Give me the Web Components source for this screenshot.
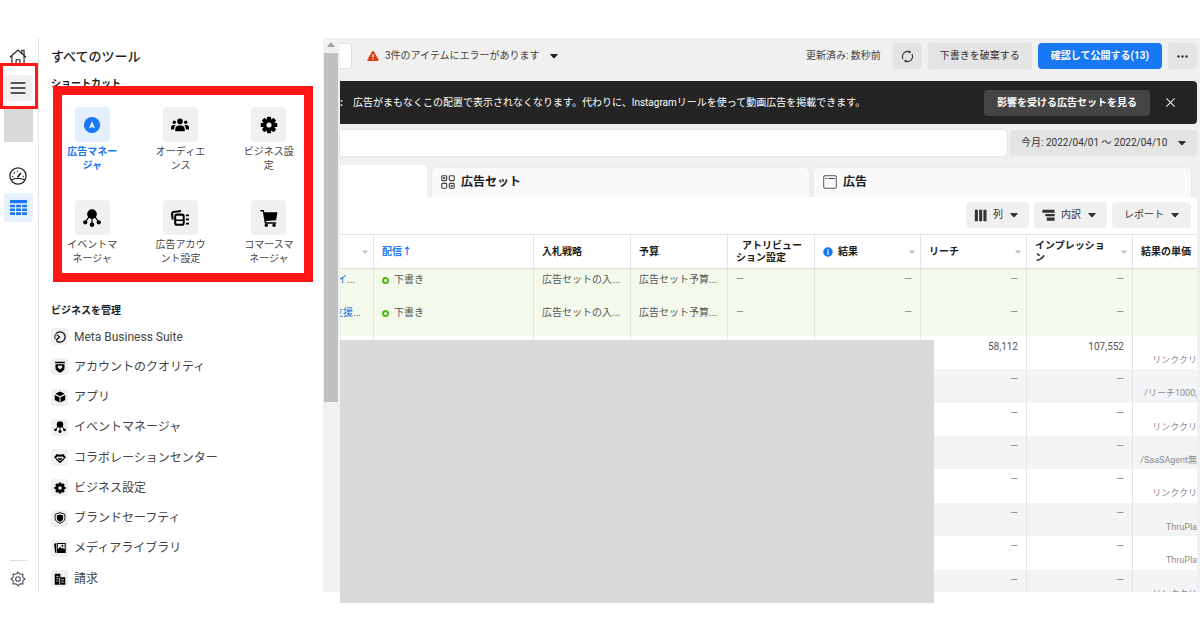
<!DOCTYPE html>
<html lang="ja">
<head>
<meta charset="utf-8">
<title>広告マネージャ</title>
<style>
body { margin: 0; background: #fff; color: #1c1e21; font: 10px/14px Roboto, "Noto Sans CJK JP", sans-serif; }
</style>
</head>
<body>
<ads-app></ads-app>
<script>
const define = (name, html, setup) => customElements.define(name, class extends HTMLElement {
  connectedCallback() {
    if (this.shadowRoot) return;
    const t = document.createElement('template');
    t.innerHTML = `<style>*{box-sizing:border-box}button,input{font:inherit;color:inherit;border:0;margin:0;padding:0;background:none}a{color:inherit;text-decoration:none}h1,h2,p{margin:0}</style>` + (typeof html === 'function' ? html(this) : html);
    this.attachShadow({ mode: 'open' }).append(t.content.cloneNode(true));
    if (setup) setup(this);
  }
});

const gearTeeth = n => Array.from({ length: 8 }, (_, i) => `<rect x="${8 - n / 2}" y=".6" width="${n}" height="4" rx=".8" transform="rotate(${i * 45} 8 8)"/>`).join('');
const ICONS = {
  home: '<g fill="none" stroke="currentColor" stroke-width="1"><path d="M.8 8.2 8 1.8l7.2 6.4M2.6 7v8h10.8V7M11.4 4.5V2h2v4.4"/><path d="M6.3 15v-4.6h3.4V15"/></g>',
  menu: '<path d="M2 3.5h12M2 8h12M2 12.5h12" stroke="currentColor" stroke-width="1.3" stroke-linecap="round"/>',
  gauge: '<g fill="none" stroke="currentColor" stroke-width="1.1"><circle cx="8" cy="8" r="7.2"/><path d="M1.800 11.400c3.700-1.600 8.700-1.600 12.400 0"/><path d="m7.600 9.200 3-3.800" stroke-width="1.500"/><path d="M2.800 8.400h1M4.300 5l.8.700M7.500 3.300v1M12.200 8.400h1" stroke-width="1.200"/></g>',
  grid: '<path d="M0 1h16v3H0zM0 5.300h4.700v2.400H0zm5.700 0h4.700v2.400H5.700zm5.700 0H16v2.400h-4.600zM0 8.900h4.700v2.400H0zm5.700 0h4.700v2.400H5.700zm5.700 0H16v2.400h-4.600zM0 12.500h4.700V15H1a1 1 0 0 1-1-1zm5.700 0h4.700V15H5.700zm5.700 0H16V14a1 1 0 0 1-1 1h-3.600z"/>',
  gearline: '<g fill="none" stroke="currentColor" stroke-width="1.100" stroke-linejoin="round"><path d="M6.600 2.800 8 1l1.400 1.800 1.300.5 2.300-.3-.3 2.300.5 1.300L15 8l-1.800 1.400-.5 1.300.3 2.300-2.300-.3-1.300.5L8 15l-1.400-1.800-1.300-.5-2.300.3.3-2.300-.5-1.300L1 8l1.800-1.400.5-1.300L3 3l2.300.3z"/><circle cx="8" cy="8" r="2.300"/></g>',
  gear: gearTeeth(3.6) + '<path fill-rule="evenodd" d="M8 2.500a5.500 5.500 0 1 0 0 11 5.500 5.500 0 0 0 0-11zm0 3.200a2.300 2.300 0 1 1 0 4.600 2.300 2.300 0 0 1 0-4.600z"/>',
  ads: '<circle cx="8" cy="8" r="7.200"/><path fill="#e4effe" d="M8 4.400 10.800 11 8 9.800 5.200 11z"/>',
  people: '<circle cx="8" cy="4.800" r="2.500"/><circle cx="2.900" cy="5.600" r="1.500"/><circle cx="13.100" cy="5.600" r="1.500"/><path d="M3.800 13.500v-1.700a3.400 3.400 0 0 1 3.400-3.300h1.600a3.400 3.400 0 0 1 3.400 3.300v1.700zM0 12v-1.600A2.400 2.400 0 0 1 2.400 8h1.900c-1 .9-1.500 2.100-1.500 4zm16 0v-1.600A2.400 2.400 0 0 0 13.600 8h-1.900c1 .9 1.500 2.100 1.500 4z"/>',
  events: '<circle cx="8" cy="4.600" r="4.300"/><circle cx="2" cy="11.800" r="1.900"/><circle cx="14" cy="11.800" r="1.900"/><circle cx="8" cy="14" r="2"/><path d="M8 8v6M5.600 6.500 2 11.800M10.400 6.500l3.600 5.300" stroke="currentColor" stroke-width="1.100"/>',
  account: '<path fill="none" stroke="currentColor" stroke-width="1.800" d="M1.500 9.500.9 4.400a1.600 1.600 0 0 1 1.400-1.800l6.600-.8"/><rect x="3.700" y="5" width="7.600" height="9" rx="1.600" fill="none" stroke="currentColor" stroke-width="1.800"/><path d="M3.700 9.400h7.600v1.300H3.700zM13.300 4.800H16v1.600h-2.700zm0 3.700H16v1.600h-2.700zm0 3.700H16v1.600h-2.700z"/>',
  cart: '<path d="M.3.800h2.300c.6 0 .9.400 1 .9l.2 1.100h11.700l-1.200 7.200-9 .7.200 1h8.900v1.400H4.300L2.500 2.300H.3z"/><circle cx="5.600" cy="14.400" r="1.500"/><circle cx="12.500" cy="14.400" r="1.500"/>',
  suite: '<g fill="none" stroke="currentColor" stroke-width="1.600"><path d="M3.200 3A6.900 6.900 0 1 1 3.200 13"/><path d="M3.200 3C1 5.200.6 8.500 1.600 10.800" stroke-width="1.300"/><path d="m3.600 4.800 3.800 3.200-4.800 4.400"/></g>',
  shield: '<path fill-rule="evenodd" d="M1.500 1h13v2h-13zM2 4.200h12v5.300c0 2.500-2.500 4.500-6 6-3.500-1.500-6-3.500-6-6zm6 7 3-3c.8-1.800-1.800-3-3-1.300C6.800 5.200 4.200 6.400 5 8.200z"/>',
  cube: '<path d="m8 .8 6.300 3L8 6.900 1.700 3.800zM1 5.200l6.300 3.100v7L1 12zm14 0L8.700 8.300v7L15 12z"/>',
  hands: '<path d="M0 7.200 3.600 2.600l3 1.200L8 3l1.400.8 3-1.200L16 7.200l-2 1.900-2.500-3-3.500.3-3.500-.3L2 9.100z"/><path fill="none" stroke="currentColor" stroke-width="1.800" d="m2.800 9 5.200 4.900L13.200 9"/><path d="m4.800 8.500 1.200-1 2 1.300 2-1.300 1.200 1L8 11.600z"/>',
  safety: '<path fill="none" stroke="currentColor" stroke-width="1.200" d="M8 .9 14.500 3v5.500c0 2.900-2.700 5.200-6.500 6.700-3.800-1.500-6.500-3.800-6.500-6.700V3z"/><path d="m8 3.300 4.200 1.300v4c0 1.800-1.700 3.300-4.200 4.500-2.500-1.200-4.200-2.700-4.200-4.500v-4z"/>',
  media: '<path d="m.2 2.300 2.600-.8v12.600l-1.400.3z"/><path fill-rule="evenodd" d="M3.600 1.200h12v13.600h-12zm1.400 8.600 3-3.200 2 2.200 1.500-1.300 2.700 2.300V2.700H5z"/><circle cx="11.200" cy="5" r="1.300"/>',
  billing: '<path d="M1 1h7.500v4.500H15V15.500H1z"/><path stroke="#f0f0f0" d="M3 4.500h3.500M3 7.500h3M3 10.500h3M7.500 6v9.500M9 9h4.500M9 12h4.500"/>',
  alert: '<path fill="#dd3c14" d="M8 1.200c.6 0 1 .3 1.300.8l6 10.700c.5 1-.1 2-1.200 2H1.900c-1.100 0-1.700-1-1.200-2L6.700 2c.3-.500.7-.8 1.300-.8z"/><path stroke="#fff" stroke-width="1.700" d="M8 5.200v4.600M8 11v1.700"/>',
  refresh: '<g fill="none" stroke="currentColor" stroke-width="1.300"><path d="M2.600 11A6.200 6.200 0 0 1 10.500 2.300M13.400 5a6.200 6.200 0 0 1-7.900 8.700"/></g><path d="m9.800.3 2.800 2.600-3.600 1.500zM6.200 15.700l-2.800-2.600 3.600-1.500z"/>',
  more: '<circle cx="3" cy="8" r="1.500"/><circle cx="8" cy="8" r="1.500"/><circle cx="13" cy="8" r="1.500"/>',
  close: '<path d="m2 2 12 12M14 2 2 14" stroke="currentColor" stroke-width="1.600"/>',
  caret: '<path d="M1.500 4h13c1 0 1.300.8.7 1.500l-5.800 6.300c-.8.900-2 .9-2.800 0L.8 5.500C.2 4.800.5 4 1.500 4z"/>',
  adset: '<g fill="none" stroke="currentColor" stroke-width="1.300"><rect x=".9" y=".9" width="5.600" height="5.600" rx="1"/><rect x="9.500" y=".9" width="5.600" height="5.600" rx="1"/><rect x=".9" y="9.500" width="5.600" height="5.600" rx="1"/><rect x="9.500" y="9.500" width="5.600" height="5.600" rx="1"/><path d="M2.500 3.700h2.400M11.100 12.300h2.400" stroke-width="2"/></g>',
  ad: '<rect x=".8" y=".8" width="14.400" height="14.400" rx="1.500" fill="none" stroke="currentColor"/><path d="M2.500 4h2M6 4h7.500" stroke="currentColor" stroke-width="1.200"/>',
  columns: '<path d="M1 1h3.800v14H1zm5.300 0h3.800v14H6.300zm5.300 0h3.800v14h-3.800z"/>',
  breakdown: '<path d="M.5 1h15v3.500H.5zM4 6.200h11.500V9H4zm2 4.400h9.500v3.900H6z"/>',
  info: '<circle cx="8" cy="8" r="7.600" fill="#1877f2"/><path stroke="#fff" stroke-width="2" d="M8 6.800v5.400M8 3.600v2"/>'
};

define('ui-icon', el => `<style>:host{display:block;flex:none;width:var(--size,16px);height:var(--size,16px)}svg{display:block;width:100%;height:100%}</style>
<svg viewBox="0 0 16 16" fill="currentColor" aria-hidden="true">${ICONS[el.getAttribute('name')]}</svg>`);

define('ui-button', el => `<style>
:host{display:flex;height:26px;--bg:#e4e4e4;--pad:12px}
button{flex:1;display:flex;align-items:center;justify-content:center;gap:8px;background:var(--bg);border-radius:4px;padding:0 var(--pad);white-space:nowrap;color:#333}
:host([variant=primary]) button{background:#1877f2;color:#fff;font-weight:700;padding:0 13px}
:host([variant=dark]) button{background:#444;color:#fff;font-weight:700;padding:0 13px}
:host([variant=soft]) button{background:#f0f0f0;gap:7px}
:host([variant=spread]) button{justify-content:space-between}
</style><button type="button" aria-label="${el.getAttribute('label') || ''}"><slot></slot></button>`,
el => { if (!el.hasAttribute('label')) el.shadowRoot.querySelector('button').removeAttribute('aria-label'); });

define('app-rail', `<style>
:host{display:flex;flex-direction:column;align-items:center;position:relative;border-right:1px solid #e3e3e3;padding:10px 2px 5px 0;color:#222}
button{display:grid;place-items:center;width:29px}
.home{height:17px;--size:18px}
.menu{height:26px;margin-top:10px;background:#f0f0f0;border-radius:4px;--size:18px}
.avatar{width:29px;height:33px;margin-top:8px;background:#d9d9d9}
.gauge{height:18px;margin-top:25px;--size:18px}
.table{height:29px;margin-top:8px;background:#e7f0fe;border-radius:3px;color:#1877f2;--size:17px}
hr{width:17px;border:0;border-top:1px solid #ddd;margin:auto 0 10px}
.settings{height:16px;--size:16px;color:#444b57}
.mark{position:absolute;top:25px;left:0;right:0;height:46px;border:3px solid #ff1616;pointer-events:none}
</style>
<button class="home" aria-label="ホーム"><ui-icon name="home"></ui-icon></button>
<button class="menu" aria-label="メニュー"><ui-icon name="menu"></ui-icon></button>
<div class="avatar"></div>
<button class="gauge" aria-label="概要"><ui-icon name="gauge"></ui-icon></button>
<button class="table" aria-label="キャンペーン"><ui-icon name="grid"></ui-icon></button>
<hr><button class="settings" aria-label="設定"><ui-icon name="gearline"></ui-icon></button>
<div class="mark"></div>`);

define('tool-shortcut', el => `<style>
:host{display:block;color:#444}
a{display:flex;flex-direction:column;align-items:center;gap:3px}
span{display:grid;place-items:center;width:35px;height:35px;border-radius:4px;background:#f0f0f0;color:#000;--size:18px}
b{font-weight:400;width:54px;text-align:center}
:host([active]) span{background:#e4effe;color:#1877f2}
:host([active]) b{font-weight:700;color:#1877f2}
</style><a href="#"><span><ui-icon name="${el.getAttribute('icon')}"></ui-icon></span><b><slot></slot></b></a>`);

define('tool-link', el => `<style>
:host{display:block}
a{display:flex;align-items:center;gap:6px;height:17px;font-size:12px;color:#444}
span{display:grid;place-items:center;width:17px;height:17px;border-radius:3px;background:#f0f0f0;color:#000}
ui-icon{--size:12px}
</style><a href="#"><span><ui-icon name="${el.getAttribute('icon')}"></ui-icon></span><slot></slot></a>`);

define('tools-panel', `<style>
:host{display:flex;min-height:0;background:#fff}
.body{flex:1;display:flex;flex-direction:column;min-width:0;overflow:hidden}
h1{font-size:13px;line-height:20px;font-weight:500;padding:9px 12px 0;color:#1c1e21}
h2{font-size:10px;line-height:14px;font-weight:700;padding:0 12px}
.first{margin-top:10px}
.shortcuts{position:relative;display:grid;grid-template-columns:repeat(3,1fr);row-gap:27px;margin:16px 10px 38px 9px}
.mark{position:absolute;inset:-21px 0 -16px 5px;border:9px solid #ff1616;pointer-events:none}
nav{flex:1;display:flex;flex-direction:column;justify-content:space-between;padding:10px 12px 5px}
.bar{width:17px;background:#f1f1f1;padding:0 2px 0 1px;display:flex;flex-direction:column}
.up{height:15px;display:grid;place-items:center;color:#a3a3a3;--size:8px;transform:scaleY(-1)}
.thumb{height:63%;background:#c1c1c1}
</style>
<div class="body">
<h1>すべてのツール</h1><h2 class="first">ショートカット</h2>
<div class="shortcuts">
<tool-shortcut icon="ads" active>広告マネージャ</tool-shortcut><tool-shortcut icon="people">オーディエンス</tool-shortcut><tool-shortcut icon="gear">ビジネス設定</tool-shortcut>
<tool-shortcut icon="events">イベントマネージャ</tool-shortcut><tool-shortcut icon="account">広告アカウント設定</tool-shortcut><tool-shortcut icon="cart">コマースマネージャ</tool-shortcut>
<div class="mark"></div></div>
<h2>ビジネスを管理</h2>
<nav>
<tool-link icon="suite">Meta Business Suite</tool-link><tool-link icon="shield">アカウントのクオリティ</tool-link><tool-link icon="cube">アプリ</tool-link><tool-link icon="events">イベントマネージャ</tool-link><tool-link icon="hands">コラボレーションセンター</tool-link><tool-link icon="gear">ビジネス設定</tool-link><tool-link icon="safety">ブランドセーフティ</tool-link><tool-link icon="media">メディアライブラリ</tool-link><tool-link icon="billing">請求</tool-link>
</nav></div>
<div class="bar"><div class="up"><ui-icon name="caret"></ui-icon></div><div class="thumb"></div></div>`);

define('top-bar', `<style>
:host{display:flex;align-items:center;gap:6px;height:26px;color:#444}
.account{width:12px;height:26px;background:#fff;border:1px solid #ddd;border-left:0;border-radius:0 4px 4px 0}
.alert{display:flex;align-items:center;gap:6px;margin:0 auto 0 9px;white-space:nowrap;--size:12px}
.alert .caret{--size:8px;color:#222;margin-left:4px}
.time{margin-right:6px;white-space:nowrap}
.icon{--pad:8px;--size:13px}
</style>
<div class="account"></div>
<button class="alert"><ui-icon name="alert"></ui-icon>3件のアイテムにエラーがあります<ui-icon class="caret" name="caret"></ui-icon></button>
<span class="time">更新済み: 数秒前</span>
<ui-button class="icon" label="更新"><ui-icon name="refresh"></ui-icon></ui-button>
<ui-button>下書きを破棄する</ui-button>
<ui-button variant="primary">確認して公開する(13)</ui-button>
<ui-button class="icon" label="その他"><ui-icon name="more"></ui-icon></ui-button>`);

define('notice-banner', `<style>
:host{display:flex;align-items:center;height:43px;background:#242424;color:#fff;border-radius:0 4px 4px 0;overflow:hidden;white-space:nowrap}
b{width:13px}p{flex:1;min-width:0}
.close{display:grid;place-items:center;width:10px;margin:0 22px 0 15px;--size:11px;color:#e8e8e8}
</style><b>:</b><p><slot></slot></p><ui-button variant="dark">影響を受ける広告セットを見る</ui-button>
<button class="close" aria-label="閉じる"><ui-icon name="close"></ui-icon></button>`);

define('filter-bar', `<style>
:host{display:flex;gap:3px;height:26px}
input{flex:1;min-width:0;background:#fff;border-radius:0 4px 4px 0;box-shadow:0 0 2px #ccc}
ui-button{width:187px;--size:8px;--pad:11px}
</style><input type="text" aria-label="検索とフィルター"><ui-button variant="spread">今月: 2022/04/01 ～ 2022/04/10<ui-icon name="caret"></ui-icon></ui-button>`);

define('level-tabs', `<style>
:host{display:flex;align-items:flex-end;gap:5px;padding-right:6px;height:32px}
button{flex:1;display:flex;align-items:center;gap:6px;height:29px;padding:0 9px 2px;background:#fafafa;border-radius:5px 5px 0 0;font-size:12px;font-weight:700;--size:14px;box-shadow:0 0 2px #ddd}
button.on{flex:none;width:87px;height:32px;background:#fff;border-radius:0 5px 0 0;box-shadow:none}
ui-icon{color:#444}
</style><button class="on" aria-label="キャンペーン"></button><button><ui-icon name="adset"></ui-icon>広告セット</button><button><ui-icon name="ad"></ui-icon>広告</button>`);

define('table-tools', `<style>
:host{display:flex;justify-content:flex-end;gap:5px;padding:5px 6px 6px;border-bottom:1px solid #e4e4e4}
ui-button{--pad:8px}
.caret{--size:8px;margin:0 3px 0 0}
.i{--size:13px;margin-right:-1px}
.report{--pad:12px}.report .caret{margin-right:0}
</style>
<ui-button variant="soft"><ui-icon class="i" name="columns"></ui-icon>列<ui-icon class="caret" name="caret"></ui-icon></ui-button>
<ui-button variant="soft"><ui-icon class="i" name="breakdown"></ui-icon>内訳<ui-icon class="caret" name="caret"></ui-icon></ui-button>
<ui-button variant="soft" class="report">レポート<ui-icon class="caret" name="caret"></ui-icon></ui-button>`);

const sort = '<ui-icon class="sort" name="caret"></ui-icon>';
const draft = link => `<tr class="draft"><td class="name"><a href="#">${link}</a></td><td><i></i>下書き</td><td>広告セットの入...</td><td>広告セット予算...</td><td class="none">—</td><td class="n none">—</td><td class="n none">—</td><td class="n none">—</td><td></td></tr>`;
const num = v => v ? `<td class="n">${v}</td>` : '<td class="n none">—</td>';
const row = (unit, reach, imp) => `<tr><td></td><td></td><td></td><td></td><td></td><td></td>${num(reach)}${num(imp)}<td class="unit">${unit}</td></tr>`;
define('ads-table', `<style>
:host{display:block;overflow:hidden}
table{width:100%;height:368px;table-layout:fixed;border-collapse:separate;border-spacing:0}
th,td{padding:0 8px;border-right:1px solid #e2e4e6;text-align:left;overflow:hidden;white-space:nowrap}
th:last-child,td:last-child{border-right:0}
th{height:34px;line-height:12px;border-bottom:1px solid #dcdee0;font-weight:700;vertical-align:middle;padding-right:5px}
th div{display:flex;align-items:center;gap:5px}
th span{flex:1;white-space:normal}
th ui-icon{--size:6px;color:#bcc0c6}
th .sort{margin-left:4px}
th .info{--size:10px}
th a{color:#1877f2}
.indent{text-indent:6px}
td{height:33px;vertical-align:top;padding-top:4px;color:#555}
.draft td{background:#f3faec}
tr:nth-child(even):not(.draft) td{background:#f3f4f6}
td.name{padding:4px 12px 0 0;color:#555}
tr:first-child td.name{padding-right:18px}
td.name a{display:flex;justify-content:flex-end}
td.name em{font-style:normal;color:#216fdb}
.n{text-align:right}
td.none{color:#8a8d91;padding-top:3px}
td.unit{text-align:right;padding:17px 0 0;font-size:9px;color:#8a8d91}
i{display:inline-block;width:7px;height:7px;border:2px solid #57b510;border-radius:50%;margin-right:5px;vertical-align:-1px}
</style>
<table><colgroup><col style="width:34px"><col><col style="width:97px"><col style="width:97px"><col style="width:87px"><col style="width:106px"><col style="width:106px"><col style="width:106px"><col style="width:64px"></colgroup>
<thead><tr><th><div><span></span>${sort}</div></th><th><a href="#">配信↑</a></th><th>入札戦略</th><th>予算</th><th><div><span class="indent">アトリビューション設定</span></div></th>
<th><div><ui-icon class="info" name="info"></ui-icon><span>結果</span>${sort}</div></th><th><div><span>リーチ</span>${sort}</div></th><th><div><span>インプレッション</span>${sort}</div></th><th>結果の単価</th></tr></thead>
<tbody>${draft('<em>イ</em>...')}${draft('<em>支援</em>...')}
${row('リンククリ', '58,112', '107,552')}${row('/リーチ1000,')}${row('リンククリ')}${row('/SaaSAgent無')}${row('リンククリ')}${row('ThruPla')}${row('ThruPla')}${row('リンククリ')}</tbody></table>`);

define('ads-manager', `<style>
:host{position:relative;display:flex;flex-direction:column;min-width:0;min-height:0;background:#f0f0f0;padding:5px 3px 0 0}
notice-banner{margin-top:12px}filter-bar{margin-top:6px}level-tabs{margin-top:9px}
.card{flex:1;display:flex;flex-direction:column;min-height:0;background:#fff;border-radius:0 4px 0 0;overflow:hidden}
ads-table{flex:1;min-height:0}
.cover{position:absolute;left:0;right:266px;top:302px;bottom:-11px;background:#d9d9d9}
</style>
<top-bar></top-bar>
<notice-banner>広告がまもなくこの配置で表示されなくなります。代わりに、Instagramリールを使って動画広告を掲載できます。</notice-banner>
<filter-bar></filter-bar><level-tabs></level-tabs>
<div class="card"><table-tools></table-tools><ads-table></ads-table></div>
<div class="cover"></div>`);

define('ads-app', `<style>
:host{display:grid;grid-template-columns:39px 301px minmax(0,1fr);grid-template-rows:minmax(0,1fr);height:calc(100vh - 76px);margin:38px 0}
</style><app-rail></app-rail><tools-panel></tools-panel><ads-manager></ads-manager>`);
</script>
</body>
</html>
